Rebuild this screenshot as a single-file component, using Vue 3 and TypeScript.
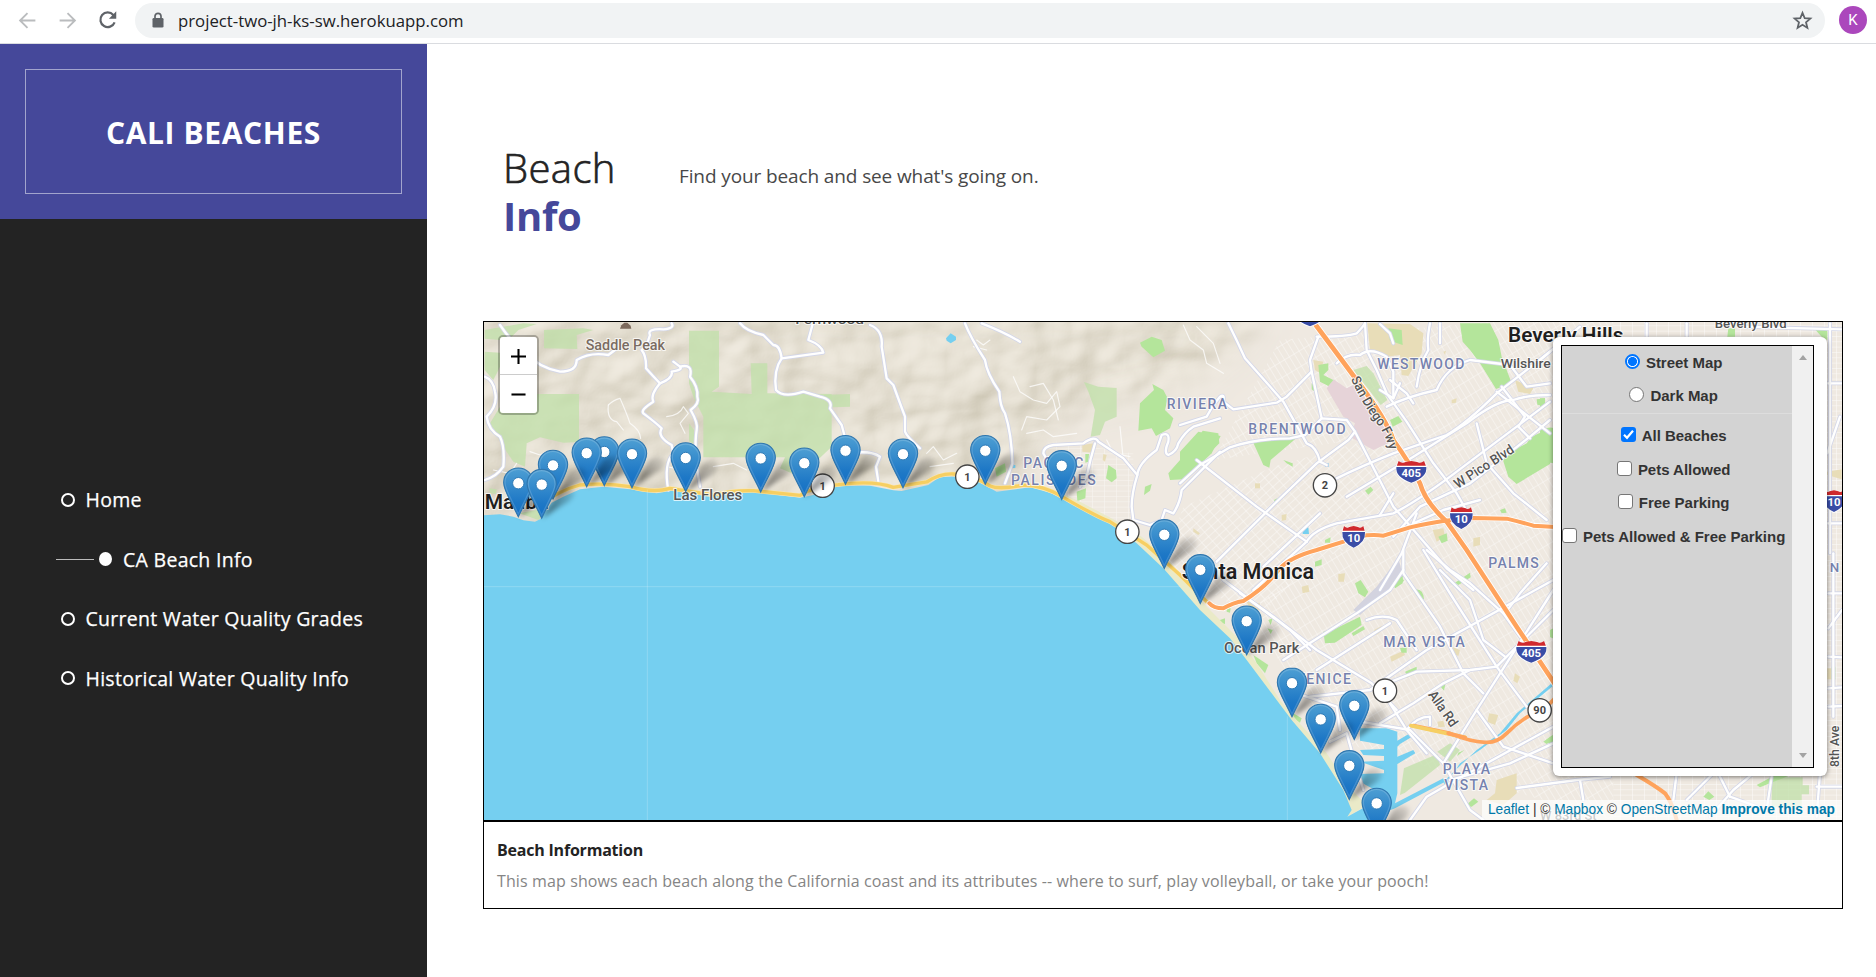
<script setup lang="ts">
interface Sheet { x: number; y: number; paths: string[] }
interface Label { x: number; y: number; w: number; t: string; s: number; k: string; r?: number }

const navItems = [
  { label: 'Home', active: false },
  { label: 'CA Beach Info', active: true },
  { label: 'Current Water Quality Grades', active: false },
  { label: 'Historical Water Quality Info', active: false },
]

const layers = [
  { label: 'Pets Allowed', on: false },
  { label: 'Free Parking', on: false },
  { label: 'Pets Allowed & Free Parking', on: false },
]

/* Pin tips, north to south */
const pins: [number, number][] = [
  [845.5, 484.3], [985.3, 484.3], [604.3, 485.6], [586.7, 486.8], [632, 487.8], [903, 487.8],
  [685.7, 491.6], [760.7, 492], [804.3, 496.8], [553, 499], [1061.7, 499.4], [518.3, 516.8],
  [541.7, 518.2], [1164.3, 568.4], [1200.3, 603.4], [1246.7, 654.8], [1292, 716.8],
  [1354.3, 739.4], [1320.7, 753], [1349.3, 799.4], [1376.7, 837],
]

const coast = 'M0 586 L60 583 L100 590 L130 601 L165 605 L180 598 L200 570 L215 548 L250 530 L300 508 L370 500 L450 508 L530 520 L580 510 L640 525 L760 520 L820 516 L960 533 L1000 525 L1030 505 L1090 497 L1170 497 L1240 511 L1265 513 L1345 495 L1380 470 L1430 470 L1495 485 L1550 515 L1650 502 L1710 518 L1790 555 L1890 610 L1970 670 L2050 745 L2160 870 L2250 955 L2300 1020 L2390 1140 L2435 1200 L2520 1300 L2590 1410 L2615 1470 L2602 1490 L2665 1456 L2660 1520 L0 1520 Z'
const sand = 'M1650 502 L1720 508 L1800 545 L1900 598 L1985 650 L2060 715 L2110 770 L2180 860 L2270 950 L2330 1030 L2400 1140 L2450 1200 L2540 1300 L2610 1405 L2660 1456 L2600 1492 L2590 1410 L2435 1205 L2300 1025 L2160 875 L2050 750 L1970 675 L1890 615 L1790 560 Z'

const parks: Sheet[] = [
  { x: 0, y: 0, paths: [
    'M192 30 L310 25 L340 30 L290 45 L292 87 L192 85 Z', 'M14 30 L60 22 L130 10 L170 12 L115 30 L95 50 L60 60 L14 56 Z',
    'M14 95 L60 98 L60 140 L40 180 L14 150 Z', 'M60 222 L297 222 L297 366 L250 368 L180 352 L140 370 L135 440 L100 425 L70 380 L30 310 L60 260 Z',
    'M627 32 L717 32 L717 200 L695 215 L815 222 L812 130 L862 130 L862 220 L1055 222 L1055 380 L960 470 L900 445 L915 412 L670 412 L670 290 L640 230 L627 190 Z',
    'M627 310 L642 330 L642 372 L627 364 Z', 'M1030 225 L1110 222 L1110 260 L1055 262 Z', 'M28 505 L50 508 L48 522 L30 520 Z', 'M118 580 L180 568 L200 572 L175 600 Z' ] },
  { x: 1110, y: 0, paths: ['M702 186 L745 200 L800 204 L800 290 L765 305 L750 345 L722 350 L735 270 L715 215 Z'] },
  { x: 2100, y: 0, paths: ['M520 150 L560 138 L580 160 L622 240 L602 255 Z'] },
  { x: 2010, y: 690, paths: ['M762 655 L862 612 L870 645 L765 728 L750 735 Z', 'M862 605 L900 580 L930 600 L900 635 Z'] },
  { x: 3060, y: 690, paths: ['M815 682 L908 682 L908 706 L927 706 L927 733 L905 733 L905 770 L815 770 Z'] },
]
const greens: Sheet[] = [
  { x: 1110, y: 0, paths: [
    'M870 68 L905 50 L935 60 L945 92 L910 112 L875 80 Z', 'M907 192 L940 210 L953 235 L945 270 L970 295 L960 325 L918 348 L905 325 L865 332 L870 250 L912 210 Z',
    'M1058 332 L1105 340 L1108 370 L1000 478 L960 480 L955 460 L1030 375 Z', 'M775 435 L798 450 L800 475 L785 487 L768 475 Z',
    'M885 500 L905 492 L900 512 L882 525 Z', 'M435 445 L465 430 L468 455 L440 470 Z', 'M680 515 L708 505 L706 535 L682 543 Z', 'M890 700 L905 695 L908 704 L894 710 Z', 'M706 402 L717 402 L715 425 L706 428 Z' ] },
  { x: 2100, y: 0, paths: [
    'M0 395 L55 335 L122 348 L95 400 L20 470 L0 478 Z', 'M220 368 L340 347 L345 358 L272 420 L268 443 L250 435 Z', 'M840 10 L930 10 L955 60 L965 110 L995 190 L948 207 L900 130 L870 90 L848 65 Z',
    'M1110 325 L1055 350 L1040 370 L965 408 L985 470 L1010 492 L1110 432 Z', 'M395 190 L410 205 L405 216 L395 208 Z', 'M415 135 L445 130 L445 150 L430 165 L460 180 L445 198 L420 185 Z',
    'M625 25 L665 30 L668 75 L630 62 Z', 'M630 300 L655 288 L667 305 L638 320 Z', 'M555 512 L572 500 L580 510 L565 524 Z', 'M1070 238 L1095 235 L1095 258 L1072 254 Z',
    'M310 420 L338 430 L338 440 L320 430 Z', 'M775 650 L800 640 L803 662 L785 670 Z', 'M405 725 L425 718 L425 735 L405 740 Z', 'M435 660 L452 652 L450 668 L435 668 Z', 'M640 785 L668 768 L668 790 L645 805 Z', 'M960 570 L975 565 L980 578 L965 580 Z', 'M520 168 L528 160 L532 170 Z', 'M282 540 L292 535 L295 545 L285 548 Z' ] },
  { x: 3180, y: 0, paths: ['M0 330 Q28 318 45 325 L45 430 L0 425 Z', 'M822 25 L862 22 L862 60 L845 50 Z', 'M565 25 L585 25 L585 50 L562 50 Z', 'M0 235 L15 235 L15 255 L0 262 Z'] },
  { x: 2010, y: 690, paths: [
    'M520 245 L548 240 L630 200 L635 225 L555 278 L525 280 Z', 'M605 250 L640 228 L645 238 L610 258 Z', 'M795 118 Q820 115 822 148 L810 148 L795 130 Z', 'M615 100 L632 90 L655 125 L645 142 L625 130 Z',
    'M730 100 L755 80 L762 92 L735 115 Z', 'M915 98 L960 68 L962 82 L925 105 Z', 'M750 295 L770 290 L770 308 L755 308 Z', 'M765 365 L800 350 L800 365 L772 378 Z', 'M870 408 L886 402 L882 422 Z', 'M355 210 L368 205 L362 225 Z', 'M352 235 L368 240 L362 252 Z',
    'M310 315 L355 345 L345 370 L320 340 Z', 'M210 210 L225 205 L225 222 L210 218 Z', 'M230 175 L242 175 L240 188 L230 185 Z', 'M430 490 L455 505 L450 518 L430 505 Z', 'M1188 570 L1210 555 L1210 575 L1200 582 Z', 'M945 768 L972 745 L985 755 L965 770 Z', 'M742 630 L770 620 L742 642 Z', 'M925 608 L943 600 L922 618 Z' ] },
  { x: 3060, y: 690, paths: ['M770 705 L820 678 L865 678 L780 712 Z', 'M610 740 L625 724 L643 740 L628 750 Z', 'M130 575 L158 555 L160 570 L140 582 Z', 'M150 240 L160 235 L160 265 L150 262 Z', 'M995 350 L1006 350 L1006 388 L995 388 Z'] },
]
const tans: Sheet[] = [
  { x: 2100, y: 0, paths: ['M562 10 L690 12 L730 40 L725 100 L685 168 L665 165 L660 105 L620 110 L570 90 Z', 'M400 120 L430 125 L420 160 L405 150 Z', 'M758 630 L790 625 L795 650 L770 665 Z', 'M1005 180 L1060 205 L1050 222 L1015 215 Z', 'M225 490 L240 490 L240 505 L225 505 Z', 'M880 655 L900 650 L900 675 L880 680 Z', 'M305 585 L320 582 L318 600 L305 602 Z', 'M815 240 L830 235 L828 248 L815 250 Z', 'M790 95 L798 92 L795 104 Z', 'M475 762 L495 760 L492 785 L475 785 Z'] },
  { x: 2010, y: 690, paths: ['M720 320 L760 302 L765 315 L725 335 Z', 'M672 240 L695 228 L698 240 L680 255 Z', 'M455 110 L475 105 L478 125 L458 130 Z', 'M1018 490 L1045 495 L1035 525 L1012 515 Z', 'M905 290 L930 300 L925 318 L908 310 Z', 'M1040 690 L1100 670 L1100 730 L1060 765 L1010 750 L1035 730 Z', 'M862 515 L880 512 L885 530 L865 532 Z', 'M1095 370 L1110 380 L1102 400 L1090 392 Z', 'M290 155 L330 160 L330 180 L300 178 Z', 'M765 375 L795 360 L798 370 L770 385 Z'] },
  { x: 3180, y: 0, paths: ['M862 455 L905 448 L905 478 L862 465 Z'] },
  { x: 3060, y: 690, paths: ['M0 690 L48 675 L48 730 L0 745 Z', 'M982 355 L995 355 L995 388 L982 388 Z'] },
  { x: 1110, y: 0, paths: ['M697 375 L732 370 L728 398 L697 395 Z', 'M760 402 L770 405 L765 425 L758 420 Z', 'M1030 625 L1050 640 L1045 645 L1030 635 Z'] },
]

/* Narrow canyon lanes */
const lanes = [
  'M385 255 Q400 240 420 235 Q440 280 450 310 Q480 330 482 355', 'M385 255 Q380 300 410 305 L430 330', 'M560 290 Q600 285 610 260 L625 280 L600 310 L615 340', 'M150 395 L180 405 L200 395 M40 450 L90 460 L110 430',
  'M1600 170 L1620 215 L1660 240 L1700 250 L1730 215 L1740 260 L1700 300 L1640 290 L1625 330', 'M1650 200 L1690 190 L1720 240 L1735 300', 'M1490 60 L1510 75 L1530 60 M1480 80 L1520 90',
  'M1920 320 L1930 420 L1960 450 M1880 360 L1900 400 L1950 410', 'M2110 15 L2130 60 L2170 90 L2180 130 L2230 160', 'M2150 20 L2200 70 L2220 130', 'M1640 340 L1690 330 L1720 350 L1790 340',
  'M1340 400 L1360 380 L1390 420 L1430 400 M1350 440 L1420 430', 'M560 440 L610 450 L640 430', 'M700 440 L760 430 L800 450',
]

const roads: Sheet[] = [
  { x: 0, y: 0, paths: [
    'M14 170 Q40 180 45 215 Q55 255 20 290 Q25 330 60 350 Q75 380 70 440 Q50 470 14 480', 'M60 15 Q90 60 130 95 Q180 145 240 155 Q290 155 290 120 Q330 95 385 105 L405 90',
    'M575 10 Q585 25 550 28 Q500 25 510 45 Q500 80 485 90 Q500 110 498 145 Q520 170 540 190 Q580 175 575 155 Q610 150 600 140 L580 125', 'M540 190 Q510 225 520 245 Q480 270 490 280 Q530 310 545 325 Q530 350 575 375 L580 400 Q550 430 565 510',
    'M600 140 Q640 130 630 170 Q655 200 652 230 Q660 250 632 270 Q655 310 650 330 Q640 390 660 500', 'M780 10 Q800 35 850 45 L880 75 Q900 75 905 115 L1030 98 Q1025 75 985 60 L998 12',
    'M905 115 Q880 150 888 210 Q910 235 970 215 L1020 230 Q1060 240 1050 265 L1085 315 L1105 390' ] },
  { x: 1110, y: 0, paths: [
    'M60 15 Q100 30 95 80 L110 175 L130 195 Q150 250 165 290 L165 335 Q170 350 210 385', 'M345 10 Q360 50 405 120 Q410 160 448 215 Q450 260 465 280 Q485 340 487 430 L465 490', 'M395 10 Q460 35 510 65',
    'M0 400 Q60 390 90 410 L78 440 L85 485', 'M600 435 L580 400 Q580 380 610 375 L700 370 Q735 345 745 365 L820 415 L862 465 Q845 520 845 560 L850 600 L900 615 L935 600 L945 570 L970 580 Q990 550 995 510 L1110 395', 'M735 370 Q720 420 710 470 L690 500',
    'M862 465 Q865 430 920 390 L935 345 Q960 335 955 365 Q940 400 955 405 Q980 395 985 370 Q1005 335 1030 320 L1110 295' ] },
  { x: 2100, y: 0, paths: [
    'M0 315 L80 290 L100 255 L120 230 Q135 220 130 245 L160 268 L290 248 L320 230 L395 155 L390 120 L415 50', 'M145 10 Q170 60 195 115 Q270 200 310 245 L380 370 Q410 380 420 425 L440 435', 'M0 490 L60 435 L150 382 Q230 355 330 355 L375 345 L410 310 L425 295 L500 300 L525 335 L505 360 L410 430 L280 555 L110 725',
    'M395 155 L425 295', 'M410 50 Q500 50 530 40 Q550 20 555 10', 'M470 130 Q500 100 540 105 Q570 80 620 110 L640 155 L640 235', 'M555 10 L560 90 L590 150 L620 220 L680 305 L760 430 L830 520 L870 590',
    'M600 12 L630 40 L640 70', 'M750 10 Q740 60 745 90 Q720 130 710 200', 'M620 260 Q680 230 770 210 Q800 140 870 120 L990 135 L1040 200 L1110 190',
    'M470 475 Q540 440 640 400 L800 345 Q860 310 950 220 L1110 95', 'M500 530 L700 410 L860 310 Q950 240 1000 240 Q1040 225 1110 225', 'M380 665 Q400 630 470 610 L640 580 Q720 540 850 440 L1110 245', 'M640 650 L720 560 L870 490 L1050 350 L1110 300',
    'M380 665 L230 560 L50 420', 'M525 335 L640 560 L800 745 L880 810', 'M380 665 L220 810', 'M420 580 L250 740', 'M640 520 L600 585', 'M710 580 L665 700 L600 810', 'M900 540 L790 570 L700 610', 'M950 215 L1110 340', 'M890 310 L920 430 L1000 520 L1100 600',
    'M965 200 L1035 290 L1015 320 L1050 355', 'M780 10 L780 70', 'M630 180 L680 220 L700 250', 'M600 210 L640 235 L660 190' ] },
  { x: 2010, y: 690, paths: [
    'M270 130 L370 200 L500 300 L665 400 L740 480', 'M220 90 L420 240 L480 300', 'M400 330 L620 190 L720 120 L760 60', 'M500 360 L720 220', 'M760 0 L760 70 L870 230 L940 370 L1000 430', 'M480 440 L660 420 L830 300 L1210 90', 'M660 420 L800 365 L960 360 L1040 350 L1210 180',
    'M820 0 L900 130 L1040 350 L1130 470', 'M650 210 Q700 190 740 210 L800 300', 'M880 640 L980 480 L1210 120', 'M690 520 L790 460 L880 400 L960 360', 'M630 515 L780 540 L880 640 L960 780 L1000 810', 'M770 540 L830 610', 'M780 810 L830 740 L900 700 L1210 530', 'M1210 580 L1080 640 L900 690', 'M980 480 L1060 590 L1210 640', 'M720 460 L770 540 Q800 500 840 500 L840 525',
    'M540 575 L590 550 L610 620 L640 720', 'M440 430 L560 470 L570 540', 'M1065 190 L1110 130 L1190 40', 'M1110 260 L1060 190 M1065 320 L1000 270 L960 150 L870 60', 'M830 0 L900 60 L960 100 L1060 190' ] },
  { x: 3060, y: 690, paths: ['M50 714 L230 690 L330 680', 'M530 670 L520 750', 'M560 750 L650 660 L690 740', 'M760 670 L700 720 L630 800', 'M690 740 L800 780 L815 680', 'M240 690 L250 750', 'M960 670 L950 800', 'M985 130 L1026 130', 'M1000 10 L1000 500', 'M985 235 L1026 180', 'M985 320 L1026 322', 'M985 415 L1026 412', 'M950 710 L1026 710', 'M985 470 L1026 468'] },
  { x: 3180, y: 0, paths: ['M870 10 L870 700', 'M620 20 L905 28', 'M862 190 L905 190', 'M862 400 L900 290', 'M862 610 L905 610', 'M0 120 L120 20', 'M320 10 L320 50', 'M440 10 L440 50'] },
]

const i10 = 'M2188 850 Q2200 865 2230 865 Q2260 848 2290 843 Q2360 800 2400 745 Q2430 712 2510 690 L2600 662 Q2650 640 2710 647 L2790 622 Q2850 608 2895 602 L2980 594 L3080 596 Q3130 608 3160 617 L3240 622'
const i405 = 'M2505 12 L2630 180 Q2720 300 2740 360 Q2790 430 2820 490 Q2835 545 2900 605 L2960 690 L3110 920 L3250 1130'
const route90 = 'M2800 1217 L2910 1240 Q2970 1265 3015 1267 Q3050 1270 3080 1240 Q3130 1190 3200 1160 L3280 1080'
const pch = 'M170 560 Q240 510 300 495 Q380 488 450 500 Q520 520 570 505 L700 525 Q760 510 820 512 Q900 520 960 526 Q1000 500 1075 494 Q1180 480 1240 502 L1340 486 Q1380 460 1420 462 Q1480 465 1530 498 Q1560 510 1630 495 Q1690 495 1750 532 Q1850 590 1890 605 L2000 675 L2100 765 L2180 845'

const labels: Label[] = [
  { x: 317, y: 91, w: 238, t: 'Saddle Peak', s: 42, k: 'peak' }, { x: 14, y: 566, w: 192, t: 'Malibu', s: 58, k: 'city' },
  { x: 580, y: 540, w: 207, t: 'Las Flores', s: 43, k: 'town' }, { x: 946, y: 13, w: 206, t: 'Fernwood', s: 41, k: 'town' },
  { x: 1630, y: 445, w: 180, t: 'PACIFIC', s: 42, k: 'area' }, { x: 1593, y: 494, w: 254, t: 'PALISADES', s: 42, k: 'area' },
  { x: 2060, y: 267, w: 181, t: 'RIVIERA', s: 42, k: 'area' }, { x: 2305, y: 342, w: 292, t: 'BRENTWOOD', s: 42, k: 'area' },
  { x: 2692, y: 147, w: 261, t: 'WESTWOOD', s: 42, k: 'area' }, { x: 3084, y: 66, w: 346, t: 'Beverly Hills', s: 59, k: 'city' },
  { x: 3062, y: 145, w: 150, t: 'Wilshire', s: 41, k: 'town' }, { x: 3704, y: 23, w: 216, t: 'Beverly Blvd', s: 38, k: 'town' },
  { x: 2933, y: 507, w: 205, t: 'W Pico Blvd', s: 41, k: 'street', r: -33 }, { x: 2105, y: 778, w: 397, t: 'Santa Monica', s: 64, k: 'city' },
  { x: 2232, y: 1000, w: 226, t: 'Ocean Park', s: 44, k: 'town' }, { x: 2447, y: 1093, w: 166, t: 'VENICE', s: 42, k: 'area' },
  { x: 2710, y: 980, w: 244, t: 'MAR VISTA', s: 42, k: 'area' }, { x: 2888, y: 1362, w: 142, t: 'PLAYA', s: 42, k: 'area' },
  { x: 2893, y: 1411, w: 131, t: 'VISTA', s: 42, k: 'area' }, { x: 3025, y: 744, w: 151, t: 'PALMS', s: 42, k: 'area' },
  { x: 2843, y: 1124, w: 122, t: 'Alla Rd', s: 41, k: 'street', r: 55 }, { x: 4076, y: 1341, w: 124, t: '8th Ave', s: 38, k: 'street', r: -90 },
  { x: 4049, y: 756, w: 29, t: 'N', s: 40, k: 'area' }, { x: 3180, y: 1500, w: 170, t: 'W 83rd St', s: 36, k: 'town' },
]
const routes = [
  { x: 1028, y: 497, t: '1' }, { x: 1462, y: 470, t: '1' }, { x: 1942, y: 635, t: '1' }, { x: 2535, y: 496, t: '2' }, { x: 2715, y: 1112, t: '1' }, { x: 3179, y: 1171, t: '90' },
]
const shields = [
  { x: 2794, y: 455, t: '405', k: 1.32 }, { x: 2621, y: 650, t: '10', k: 1 }, { x: 2944, y: 594, t: '10', k: 1 }, { x: 3154, y: 995, t: '405', k: 1.32 }, { x: 4062, y: 543, t: '10', k: 1 }, { x: 2490, y: -14, t: '', k: 1.32 },
]
</script>

<template>
  <div class="page">
    <header class="toolbar">
      <svg class="nav-icon" viewBox="0 0 24 24"><path d="M21 12H4M12 3.500 3.500 12l8.500 8.500" /></svg>
      <svg class="nav-icon" viewBox="0 0 24 24"><path d="M3 12h17M12 3.500 20.500 12l-8.500 8.500" /></svg>
      <svg class="nav-icon reload" viewBox="0 0 24 24"><path d="M19.200 14.500A8 8 0 1 1 17.800 6.500L20 8.600" /><path class="solid" d="M21 2.500v8h-8z" /></svg>
      <div class="omnibox">
        <svg class="lock" viewBox="0 0 12 16"><path d="M3 7V4.300a3 3 0 0 1 6 0V7" fill="none" stroke="#5f6368" stroke-width="1.700" /><rect x="0.500" y="6" width="11" height="9.500" rx="1.300" fill="#5f6368" /></svg>
        <span class="url">project-two-jh-ks-sw.herokuapp.com</span>
        <svg class="star" viewBox="0 0 24 24"><path d="M12 3.200 14.500 9.300 21 9.800 16 14 17.600 20.500 12 17 6.400 20.500 8 14 3 9.800 9.500 9.300Z" fill="none" stroke="#5f6368" stroke-width="2" /></svg>
      </div>
      <div class="avatar">K</div>
    </header>

    <div class="body">
      <aside class="sidebar">
        <div class="brand"><div class="brand-box"><span>CALI BEACHES</span></div></div>
        <nav class="menu">
          <a v-for="item in navItems" :key="item.label" class="menu-item" :class="{ active: item.active }">
            <i class="rule"></i><i class="dot"></i><span>{{ item.label }}</span>
          </a>
        </nav>
      </aside>

      <main class="content">
        <section class="intro">
          <h1><span>Beach</span><br /><b>Info</b></h1>
          <p>Find your beach and see what's going on.</p>
        </section>

        <section class="map">
          <svg class="tiles" viewBox="484 322 1358 498" width="1358" height="498">
            <defs>
              <filter id="relief" x="0" y="0" width="100%" height="100%" color-interpolation-filters="sRGB">
                <feTurbulence type="fractalNoise" baseFrequency="0.014 0.017" numOctaves="3" seed="11" />
                <feDiffuseLighting surfaceScale="10" lighting-color="#fff"><feDistantLight azimuth="225" elevation="55" /></feDiffuseLighting>
                <feColorMatrix values="0.26 0 0 0 0.683  0.27 0 0 0 0.653  0.32 0 0 0 0.560  0 0 0 0 1" />
              </filter>
              <filter id="soft" x="-20%" y="-20%" width="140%" height="140%"><feGaussianBlur stdDeviation="18" /></filter>
              <filter id="shade" x="-50%" y="-50%" width="200%" height="200%"><feGaussianBlur stdDeviation="2.400" /></filter>
              <linearGradient id="pinFill" x1="0" y1="0" x2="0" y2="1"><stop offset="0" stop-color="#4e9fd3" /><stop offset="0.700" stop-color="#1e78c6" /><stop offset="1" stop-color="#126fc6" /></linearGradient>
              <linearGradient id="shadeFill" x1="0" y1="1" x2="1" y2="0"><stop offset="0" stop-color="#000" stop-opacity="0.600" /><stop offset="1" stop-color="#000" stop-opacity="0.060" /></linearGradient>
              <pattern id="gridA" width="27" height="18" patternUnits="userSpaceOnUse" patternTransform="rotate(-42)"><path d="M0 0H27M0 0V18" stroke="#fff" stroke-width="3" fill="none" /></pattern>
              <pattern id="gridB" width="17" height="42" patternUnits="userSpaceOnUse" patternTransform="rotate(-31)"><path d="M0 0H17M0 0V42" stroke="#fff" stroke-width="3" fill="none" /></pattern>
              <pattern id="gridC" width="36" height="16" patternUnits="userSpaceOnUse"><path d="M0 0H36M0 0V16" stroke="#fff" stroke-width="3" fill="none" /></pattern>
              <mask id="hills"><path d="M460 300H1270L1240 345L1190 385L1120 400L1060 420L1000 520L460 560Z" fill="#fff" filter="url(#soft)" /></mask>
              <symbol id="pin" viewBox="0 0 62 54" overflow="visible">
                <path d="M15.500 49.500 L32 22 Q44 14 48 22 Q49 30 36 36 Z" fill="url(#shadeFill)" filter="url(#shade)" />
                <path d="M15.250 0.600C7 0.600 0.600 7 0.600 15.200C0.600 23 6 30 15.250 49.400C24.500 30 29.900 23 29.900 15.200C29.900 7 23.500 0.600 15.250 0.600Z" fill="url(#pinFill)" stroke="#2f76ae" stroke-width="1.100" />
                <path d="M15.250 1.900C7.800 1.900 1.900 7.800 1.900 15.200C1.900 22 7 29 15.250 46.500C23.500 29 28.600 22 28.600 15.200C28.600 7.800 22.700 1.900 15.250 1.900Z" fill="none" stroke="#fff" stroke-opacity="0.160" stroke-width="1.200" />
                <circle cx="15.250" cy="15.800" r="5.700" fill="#fff" stroke="#2e7ab6" stroke-width="1" />
              </symbol>
              <path id="freewayName" d="M2612 177 Q2655 265 2690 310 Q2715 340 2729 393" />
            </defs>

            <rect x="484" y="322" width="1358" height="498" fill="#efe9e1" />
            <g transform="translate(480 320) scale(0.333333)">
              <path d="M2110 560 L2380 440 L2700 350 L2860 610 L2500 720 L2330 900 L2050 730Z" fill="url(#gridA)" opacity="0.750" />
              <path d="M1700 360 L1960 400 L1960 640 L1740 520Z" fill="url(#gridC)" opacity="0.600" />
              <path d="M2860 610 L2500 720 L2300 880 L2560 1260 L3400 1500 L3400 0 L3100 0 L2700 350Z M2200 420 L2400 60 L3100 0 L2700 350Z" fill="url(#gridB)" opacity="0.720" />
              <path d="M3400 0H4090V1500H3400Z" fill="url(#gridC)" opacity="0.850" />
            </g>
            <g mask="url(#hills)"><rect x="484" y="322" width="820" height="260" filter="url(#relief)" /></g>

            <g transform="translate(480 320) scale(0.333333)">
              <g v-for="(s, i) in parks" :key="'p' + i" :transform="`translate(${s.x} ${s.y})`" class="park"><path v-for="d in s.paths" :key="d" :d="d" /></g>
              <path d="M2540 205 L2560 178 L2600 205 L2620 195 L2720 300 L2725 370 L2680 390 L2610 350 L2625 310 L2590 290 Z" fill="#e6d3d8" />
              <path d="M2620 870 L2690 800 L2755 715 L2770 770 L2640 885 Z" fill="#d3d3df" />
              <g v-for="(s, i) in tans" :key="'t' + i" :transform="`translate(${s.x} ${s.y})`" class="tan"><path v-for="d in s.paths" :key="d" :d="d" /></g>
              <g v-for="(s, i) in greens" :key="'g' + i" :transform="`translate(${s.x} ${s.y})`" class="green"><path v-for="d in s.paths" :key="d" :d="d" /></g>
              <path :d="sand" fill="#eaeac8" />
              <path :d="coast" fill="#75cff0" />
              <g fill="#75cff0">
                <path d="M1398 55 L1412 40 L1428 50 L1428 60 L1412 70 L1400 62Z M1590 435H1606V444H1590Z M2534 432 L2546 430 L2546 440 L2535 440Z M2467 628 L2485 622 L2487 642 L2468 642Z" />
                <path d="M2640 1225 L2720 1225 L2752 1235 L2752 1262 L2790 1240 L2806 1244 L2760 1272 L2752 1280 L2752 1310 L2800 1290 L2806 1300 L2752 1332 L2752 1420 L2745 1450 L2890 1375 L2895 1385 L2745 1465 L2680 1490 L2712 1440 L2712 1425 L2640 1385 L2640 1362 L2712 1360 L2712 1350 L2640 1325 L2712 1322 L2712 1308 L2650 1305 L2640 1290 L2712 1287 L2712 1275 L2640 1262 Z" />
                <path d="M2890 1385 L2990 1290 L3060 1240 L3110 1180 L3250 1060 L3252 1070 L3120 1180 L3080 1230 L3000 1290 L2940 1330 L2895 1395Z" />
              </g>
              <path v-for="d in lanes" :key="d" :d="d" class="lane" />
              <g v-for="(s, i) in roads" :key="'c' + i" :transform="`translate(${s.x} ${s.y})`" class="casing"><path v-for="d in s.paths" :key="d" :d="d" /></g>
              <g v-for="(s, i) in roads" :key="'r' + i" :transform="`translate(${s.x} ${s.y})`" class="road"><path v-for="d in s.paths" :key="d" :d="d" /></g>
              <g fill="none" stroke-linecap="round">
                <path :d="pch" stroke="#fbe7b0" stroke-width="13" /><path :d="pch" stroke="#f6cf63" stroke-width="10" />
                <path :d="i10" stroke="#fff" stroke-width="17" /><path :d="i405" stroke="#fff" stroke-width="19" />
                <path :d="i10" stroke="#ffa35c" stroke-width="12" /><path :d="i405" stroke="#ffa35c" stroke-width="14" />
                <path :d="route90" stroke="#ffa35c" stroke-width="11" /><path d="M2793 1217 L2955 1252" stroke="#f6cf63" stroke-width="12" /><path d="M2905 1240 L2955 1253" stroke="#ffa35c" stroke-width="12" />
                <path d="M3470 1365 Q3530 1400 3555 1420 Q3575 1445 3590 1500" stroke="#ffa35c" stroke-width="12" />
                <path d="M502 510V1500M2422 1190V1500M12 800H2100" stroke="#fff" stroke-opacity="0.200" stroke-width="3" />
              </g>
              <path d="M420 26 L424 16 L433 8 L442 8 L452 17 L454 26Z" fill="#7d6a5d" />
              <text v-for="l in labels" :key="l.t" :class="l.k" :font-size="l.s" :textLength="l.w" :lengthAdjust="l.k === 'area' ? 'spacing' : 'spacingAndGlyphs'" :transform="`translate(${l.x} ${l.y}) rotate(${l.r || 0})`">{{ l.t }}</text>
              <text class="street" font-size="40"><textPath href="#freewayName" textLength="244" lengthAdjust="spacingAndGlyphs">San Diego Fwy</textPath></text>
              <g v-for="r in routes" :key="r.x" :transform="`translate(${r.x} ${r.y})`">
                <circle r="35" fill="#fff" stroke="#454545" stroke-width="4" /><text class="route" y="12">{{ r.t }}</text>
              </g>
              <g v-for="h in shields" :key="h.x" :transform="`translate(${h.x} ${h.y})`">
                <g :transform="`scale(${h.k} 1)`">
                  <path d="M-30 -33 Q-22 -25 -13 -31 Q0 -24 13 -31 Q22 -25 30 -33 L35 -17 V-5 Q34 22 0 35 Q-34 22 -35 -5 V-17Z" fill="#fff" />
                  <path d="M-29 -32 Q-21 -24 -13 -29 L0 -32 L13 -29 Q21 -24 29 -32 L33 -18 H-33Z" fill="#d02a2e" />
                  <path d="M-34 -14H34Q37 16 0 33Q-37 16 -34 -14Z" fill="#3a4da6" />
                </g>
                <text class="shield" y="15">{{ h.t }}</text>
              </g>
            </g>
            <use v-for="p in pins" :key="p[0]" href="#pin" :x="p[0] - 15.250" :y="p[1] - 49.400" width="62" height="54" />
          </svg>

          <div class="zoom">
            <button><svg viewBox="0 0 16 16"><path d="M0 8H16M8 0V16" /></svg></button>
            <button><svg viewBox="0 0 16 16"><path d="M0.500 8H15.500" /></svg></button>
          </div>

          <div class="panel">
            <div class="list">
              <div class="options">
                <label><i class="radio on"></i><span>Street Map</span></label>
                <label><i class="radio"></i><span>Dark Map</span></label>
                <hr />
                <label><i class="check on"><svg viewBox="0 0 15 15"><path d="M3 7.800 6 10.800 12 3.800" /></svg></i><span>All Beaches</span></label>
                <label v-for="l in layers" :key="l.label"><i class="check"></i><span>{{ l.label }}</span></label>
              </div>
              <div class="scroll"><i class="up"></i><i class="down"></i></div>
            </div>
          </div>

          <div class="credit"><a>Leaflet</a> | © <a>Mapbox</a> © <a>OpenStreetMap</a> <a><b>Improve this map</b></a></div>
        </section>

        <section class="info">
          <h2>Beach Information</h2>
          <p>This map shows each beach along the California coast and its attributes -- where to surf, play volleyball, or take your pooch!</p>
        </section>
      </main>
    </div>
  </div>
</template>

<style>
html, body { margin: 0; overflow: hidden; background: #fff; }
</style>

<style scoped>
.page { width: 1876px; height: 977px; overflow: hidden; display: flex; flex-direction: column; font-family: "Open Sans", "Noto Sans", sans-serif; color: #232323; background: #fff; }
.page * { box-sizing: border-box; }

.toolbar { height: 44px; flex: none; display: flex; align-items: center; padding: 0 9px 3px 17px; border-bottom: 1px solid #dadce0; }
.nav-icon { width: 21px; height: 21px; margin-right: 19px; fill: none; stroke: #babcbe; stroke-width: 2.100; }
.nav-icon.reload { margin: 0 16px 0 0; width: 22px; height: 22px; stroke: #5f6368; stroke-width: 2.400; }
.nav-icon .solid { fill: #5f6368; stroke: none; }
.omnibox { flex: 1; height: 35px; border-radius: 18px; background: #f1f3f4; display: flex; align-items: center; padding: 0 12px 0 17px; }
.lock { width: 12px; height: 16px; margin-right: 14px; }
.url { flex: 1; padding-top: 1px; font-size: 16.760px; line-height: 20px; color: #202124; }
.star { width: 21px; height: 21px; }
.avatar { width: 28px; height: 28px; margin-left: 14px; border-radius: 50%; background: #ab47bc; color: #fff; font: 15px/28px Roboto, sans-serif; text-align: center; }

.body { flex: 1; display: flex; min-height: 0; }
.sidebar { width: 427px; background: #232323; flex: none; }
.brand { height: 175px; padding: 25px; background: #45489a; }
.brand-box { height: 125px; padding-top: 2px; border: 1px solid rgba(255, 255, 255, 0.5); display: flex; align-items: center; justify-content: center; color: #fff; font-size: 30px; font-weight: 700; letter-spacing: 0.620px; }
.menu { padding-top: 251px; }
.menu-item { display: flex; align-items: center; height: 59.500px; padding-left: 61px; color: #fff; font-size: 19.500px; font-weight: 500; letter-spacing: 0.280px; -webkit-text-stroke: 0.250px #fff; }
.menu-item .rule { display: none; }
.menu-item .dot { width: 14px; height: 14px; border: 2.500px solid #fff; border-radius: 50%; margin-right: 10.500px; }
.menu-item.active { padding-left: 56px; }
.menu-item.active .rule { display: block; width: 38px; height: 1px; background: #bbb; margin-right: 5px; }
.menu-item.active .dot { width: 13px; height: 14px; background: #fff; margin-right: 11px; }

.content { flex: 1; padding-left: 56px; }
.intro { height: 277px; display: flex; padding: 100px 0 0 20px; }
h1 { width: 176px; margin: 0; font-size: 40px; line-height: 48px; font-weight: 300; letter-spacing: 0.400px; -webkit-text-stroke: 0.650px #232323; }
h1 b { color: #45489a; font-weight: 700; letter-spacing: -0.300px; -webkit-text-stroke: 0; }
.intro p { margin: 18px 0 0; font-size: 19px; line-height: 28px; letter-spacing: -0.115px; color: #484848; }

.map { position: relative; width: 1360px; height: 500px; border: 1px solid #000; overflow: hidden; }
.tiles { display: block; }
.park { fill: #c2e0ab; fill-opacity: 0.78; }
.green { fill: #b4e59b; }
.tan { fill: #e8ddb8; }
.casing, .road, .lane { fill: none; stroke-linejoin: round; stroke-linecap: round; }
.casing { stroke: #d4d7e8; stroke-width: 12; }
.road { stroke: #fff; stroke-width: 7; }
.lane { stroke: #fff; stroke-width: 3.500; stroke-opacity: 0.750; }
text { font-family: Roboto, "Open Sans", sans-serif; paint-order: stroke; stroke-linejoin: round; stroke: rgba(255, 255, 255, 0.75); stroke-width: 6px; }
.city { fill: #1f1f1f; font-weight: 600; }
.town, .street { fill: #555; font-weight: 500; }
.peak { fill: #7a6c62; font-weight: 500; }
.area { fill: #7682ae; font-weight: 500; }
.route { font-size: 33px; font-weight: 700; text-anchor: middle; fill: #444; stroke: none; }
.shield { font-size: 34px; font-weight: 700; text-anchor: middle; fill: #fff; stroke: none; }

.zoom { position: absolute; left: 14px; top: 13px; width: 41px; height: 80px; border: 2px solid rgba(0, 0, 0, 0.25); border-radius: 5px; background-clip: padding-box; display: flex; flex-direction: column; }
.zoom button { flex: 1; border: 0; padding: 0; background: #fff; display: flex; align-items: center; justify-content: center; border-radius: 0 0 3px 3px; }
.zoom button:first-child { flex: none; height: 38px; border-bottom: 1px solid #ccc; padding-top: 2px; border-radius: 3px 3px 0 0; }
.zoom svg { width: 15px; height: 15px; stroke: #000; stroke-width: 2.200; }

.panel { position: absolute; left: 1069px; top: 15px; width: 274px; height: 439px; padding: 8px 13px 8px 8px; background: #fff; border-radius: 6px; box-shadow: 0 1px 5px rgba(0, 0, 0, 0.5); }
.list { height: 423px; border: 1px solid #000; background: #d3d3d3; display: flex; }
.options { flex: 1; padding: 0 7px 0 0; }
.options label { height: 33.400px; display: flex; align-items: center; justify-content: center; gap: 6px; font: bold 15px/20px "Liberation Sans", sans-serif; letter-spacing: -0.020px; color: #333; white-space: nowrap; }
hr { height: 1px; border: 0; background: #ddd; margin: 0 -7px 6px 0; }
.radio, .check { width: 15px; height: 15px; border: 1px solid #767676; background: #fff; flex: none; margin-top: -3px; }
.radio { border-radius: 50%; }
.radio.on { border: 2px solid #0075ff; background: radial-gradient(#0075ff 0 4.200px, #fff 4.800px); }
.check { border-radius: 3px; }
.check.on { border: 0; background: #0075ff; }
.check svg { display: block; fill: none; stroke: #fff; stroke-width: 2.200; }
.scroll { width: 21px; background: #f0f0f0; display: flex; flex-direction: column; align-items: center; justify-content: space-between; padding: 9px 0; }
.up, .down { border: 4px solid transparent; }
.up { border-top: 0; border-bottom: 5px solid #a3a3a3; }
.down { border-bottom: 0; border-top: 5px solid #a3a3a3; }

.credit { position: absolute; right: 0; bottom: 0; height: 20px; padding: 0 7px 0 6px; background: rgba(255, 255, 255, 0.7); font: 13.730px/20px "Liberation Sans", sans-serif; color: #333; white-space: nowrap; }
.credit a { color: #0078a8; }

.info { width: 1360px; height: 88px; padding: 15px 13px; border: 1px solid #000; }
h2 { margin: 0; font-size: 16px; line-height: 26px; font-weight: 700; letter-spacing: -0.210px; }
.info p { margin: 5px 0 0; font-size: 16px; line-height: 26px; letter-spacing: 0.118px; color: #858585; white-space: nowrap; }
</style>
